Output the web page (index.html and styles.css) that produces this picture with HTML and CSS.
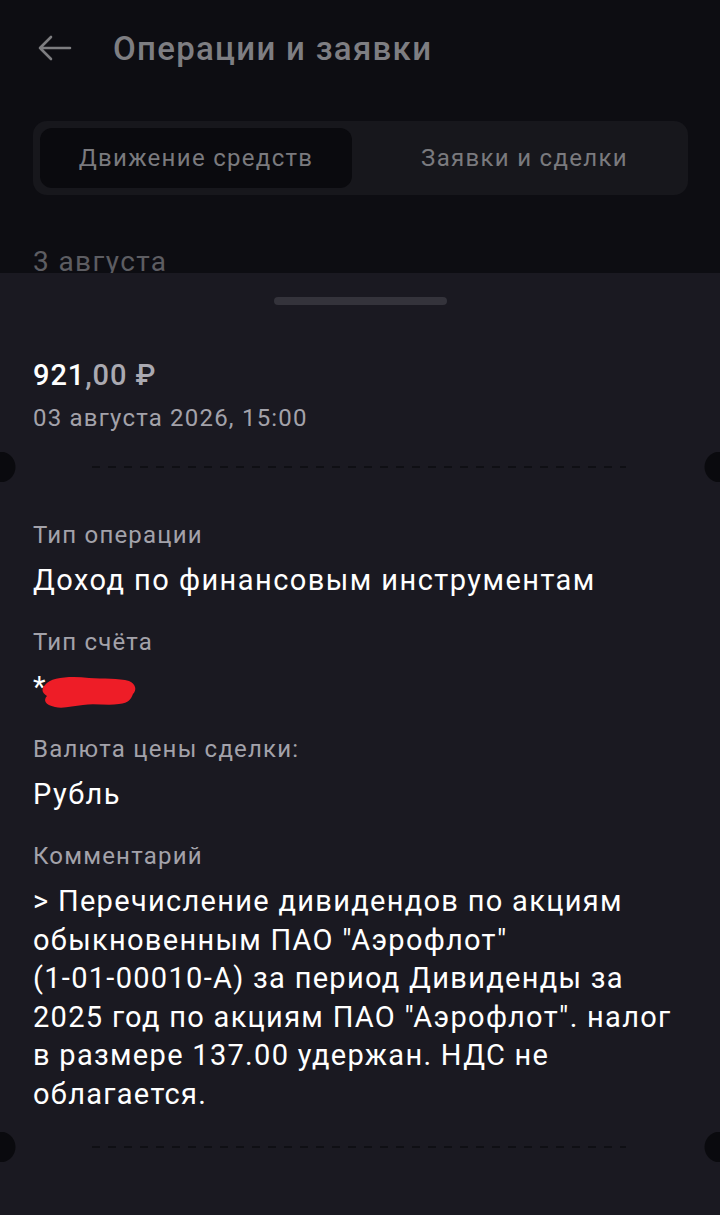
FILE: index.html
```html
<!DOCTYPE html>
<html lang="ru">
<head>
  <meta charset="UTF-8">
  <meta name="viewport" content="width=device-width, initial-scale=1" />
  <title>Операции и заявки</title>
  <link rel="stylesheet" href="styles.css">
</head>
<body>
  <div class="screen">
    <header class="topbar">
      <svg class="back" width="36" height="28" viewBox="0 0 36 28">
        <path d="M34 14H4M15 3L4 14l11 11" fill="none" stroke="#7d7d80" stroke-width="2.6" stroke-linecap="round" stroke-linejoin="round"/>
      </svg>
      <h1>Операции и заявки</h1>
    </header>

    <div class="tabs">
      <div class="tab active">Движение средств</div>
      <div class="tab">Заявки и сделки</div>
    </div>

    <div class="day">3 августа</div>

    <section class="sheet">
      <div class="handle"></div>

      <div class="amount"><b>921</b>,00 ₽</div>
      <div class="date">03 августа 2026, 15:00</div>

      <div class="cut"></div>

      <div class="fields">
        <div class="label">Тип операции</div>
        <div class="value">Доход по финансовым инструментам</div>

        <div class="label">Тип счёта</div>
        <div class="value account">*<svg class="scribble" width="98" height="38" viewBox="0 0 98 38">
            <path d="M4 14C10 6 30 5 48 7c14 1 30 0 40 3 7 3 8 9 4 13-2 5-4 9-14 10-12 2-24-1-36 1-10 1-20 4-28 2C4 34 2 29 6 25 1 22 0 18 4 14z" fill="#ee1d27"/>
          </svg></div>

        <div class="label">Валюта цены сделки:</div>
        <div class="value">Рубль</div>

        <div class="label">Комментарий</div>
        <div class="value comment">&gt; Перечисление дивидендов по акциям обыкновенным ПАО "Аэрофлот" (1-&#8288;01-&#8288;00010-&#8288;A) за период Дивиденды за 2025 год по акциям ПАО "Аэрофлот". налог в размере 137.00 удержан. НДС не облагается.</div>
      </div>

      <div class="cut"></div>
    </section>
  </div>
</body>
</html>
```

FILE: styles.css
```css
body {
  margin: 0;
  background: #0d0d12;
  font-family: Roboto, "Noto Sans", sans-serif;
}

.screen {
  width: 720px;
  height: 1215px;
  overflow: hidden;
  display: flex;
  flex-direction: column;
}

.topbar {
  display: flex;
  align-items: center;
  height: 96px;
  padding: 0 0 0 36px;
}

.back {
  margin-right: 41px;
}

.topbar h1 {
  margin: 0;
  font-size: 33px;
  font-weight: 500;
  letter-spacing: 1.3px;
  color: #7e7e82;
}

.tabs {
  margin: 25px 32px 0 33px;
  height: 74px;
  padding: 7px;
  box-sizing: border-box;
  background: #17171c;
  border-radius: 14px;
  display: grid;
  grid-template-columns: 312px 1fr;
}

.tab {
  display: flex;
  align-items: center;
  justify-content: center;
  font-size: 24px;
  letter-spacing: 1.3px;
  color: #7a7a7e;
  border-radius: 12px;
}

.tab:last-child {
  padding-left: 16px;
}

.tab.active {
  background: #0a0a0e;
}

.day {
  margin: 51px 0 0 33px;
  height: 27px;
  font-size: 28px;
  line-height: 32px;
  letter-spacing: 1.4px;
  color: #5d5d62;
}

.sheet {
  position: relative;
  flex: 1;
  background: #1a1921;
  padding: 24px 0 0;
}

.handle {
  width: 173px;
  height: 8px;
  margin: 0 auto;
  border-radius: 4px;
  background: #34333b;
}

.amount {
  margin: 53px 0 0 33px;
  font-size: 29px;
  line-height: 34px;
  font-weight: 500;
  letter-spacing: 0.9px;
  color: #aaa9b1;
}

.amount b {
  font-weight: 500;
  color: #ffffff;
}

.date {
  margin: 11px 0 0 33px;
  font-size: 24px;
  line-height: 30px;
  letter-spacing: 1.2px;
  color: #a3a2aa;
}

.cut {
  position: relative;
  height: 30px;
  margin-top: 19px;
}

.cut::after {
  content: "";
  position: absolute;
  left: 92px;
  right: 94px;
  top: 14px;
  height: 2px;
  background: repeating-linear-gradient(90deg, #0f0f14 0 8px, transparent 8px 16px);
}

.cut::before {
  content: "";
  position: absolute;
  left: -15px;
  right: -15px;
  top: 0;
  height: 30px;
  background:
    radial-gradient(circle at 15px 15px, #0a0a0e 15px, transparent 16px),
    radial-gradient(circle at calc(100% - 15px) 15px, #0a0a0e 15px, transparent 16px);
}

.fields {
  padding: 38px 27px 0 33px;
}

.label {
  font-size: 24px;
  line-height: 30px;
  letter-spacing: 1.2px;
  color: #a3a2aa;
}

.value {
  font-size: 29px;
  line-height: 36px;
  letter-spacing: 1.45px;
  color: #ffffff;
  margin: 12px 0 29px;
}

.account {
  display: flex;
  align-items: flex-start;
  height: 36px;
}

.scribble {
  margin: 2px 0 0 -6px;
}

.comment {
  line-height: 38.5px;
  letter-spacing: 1.3px;
  margin: 11px 0 5px;
}
```
